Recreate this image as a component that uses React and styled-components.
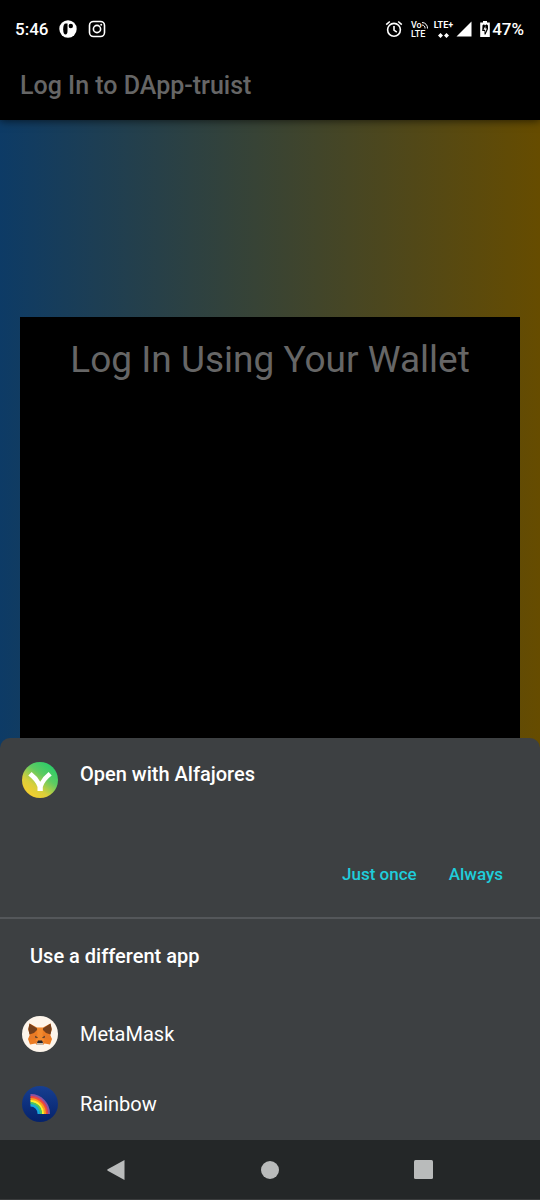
import React from "react";
import styled, { createGlobalStyle } from "styled-components";

const GlobalStyle = createGlobalStyle`
  *, *::before, *::after { box-sizing: border-box; }
  body {
    margin: 0;
    background: #000;
    font-family: Roboto, "Liberation Sans", sans-serif;
  }
  h1, h2, p { margin: 0; }
  button {
    margin: 0;
    padding: 0;
    border: 0;
    background: none;
    color: inherit;
    font: inherit;
    cursor: pointer;
  }
  svg { display: block; flex: none; }
`;

const Screen = styled.div`
  display: flex;
  flex-direction: column;
  min-height: 100vh;
`;

const StatusBar = styled.div`
  display: flex;
  align-items: center;
  justify-content: space-between;
  height: 52px;
  padding: 6px 16px 0 15px;
  background: #000;
  color: #fff;
  font-size: 17px;
  font-weight: 500;
  line-height: 24px;
`;

const StatusGroup = styled.div`
  display: flex;
  align-items: center;
  gap: ${(p) => p.$gap}px;
`;

const Battery = styled.span`
  display: flex;
  align-items: center;
  gap: 2px;
`;

const NetworkLabel = styled.span`
  display: flex;
  flex-direction: column;
  align-items: ${(p) => (p.$centered ? "center" : "flex-start")};
  gap: ${(p) => (p.$centered ? 4 : 1)}px;
  font-size: 9px;
  line-height: 8px;
  font-weight: ${(p) => (p.$centered ? 700 : 500)};
`;

const NetworkLine = styled.span`
  display: flex;
`;

const AppBar = styled.header`
  position: relative;
  display: flex;
  align-items: center;
  height: 68px;
  padding: 0 20px;
  background: #000;
  box-shadow: 0 1px 8px rgba(0, 0, 0, 0.6);
`;

const AppTitle = styled.h1`
  color: #666;
  font-size: 25px;
  font-weight: 500;
  line-height: 32px;
`;

const Backdrop = styled.main`
  display: flex;
  flex: 1;
  padding: 197px 20px 0;
  background: linear-gradient(90deg, #0d3b66, #664c00);
`;

const WalletCard = styled.section`
  flex: 1;
  padding: 19px 16px;
  background: #000;
`;

const WalletHeading = styled.h2`
  color: #666;
  font-size: 37px;
  font-weight: 400;
  line-height: 48px;
  text-align: center;
`;

const Sheet = styled.section`
  position: relative;
  margin-top: -10px;
  border-radius: 10px 10px 0 0;
  background: #3d4042;
  color: #fff;
  font-size: 20px;
  line-height: 24px;
`;

const SheetHeader = styled.div`
  display: flex;
  align-items: flex-start;
  gap: 22px;
  padding: 24px 22px 52px;
`;

const SheetTitle = styled.h2`
  font-size: 20px;
  font-weight: 500;
  line-height: 24px;
`;

const SheetActions = styled.div`
  display: flex;
  justify-content: flex-end;
  padding: 0 21px 19px;
`;

const TextButton = styled.button`
  height: 48px;
  padding: 0 16px;
  color: #1fcddb;
  font-size: 17px;
  font-weight: 500;
`;

const OtherApps = styled.div`
  padding-bottom: 1px;
  border-top: 2px solid #54575a;
`;

const OtherTitle = styled(SheetTitle)`
  padding: 25px 30px 31px;
`;

const AppRow = styled.button`
  display: flex;
  align-items: center;
  gap: 22px;
  width: 100%;
  height: 70px;
  padding: 0 22px;
  text-align: left;
`;

const NavBar = styled.nav`
  display: flex;
  height: 60px;
  padding: 0 40px 0 39px;
  border-bottom: 1px solid #3a3c3d;
  background: #242728;
`;

const NavButton = styled.button`
  display: flex;
  flex: 1;
  align-items: center;
  justify-content: center;
  color: #b9bbbb;
`;

const NotificationIcon = () => (
  <svg width="18" height="18" viewBox="0 0 18 18" aria-hidden="true">
    <circle cx="9" cy="9" r="8.7" fill="#fff" />
    <path d="M8.500 3.500v7.500c0 2.200-.6 3.400-2 3.400S4.200 13 4.200 9.200 5 3.500 6.800 3.500z" fill="#000" />
    <circle cx="11.800" cy="6" r="2.200" fill="#000" />
  </svg>
);

const InstagramIcon = () => (
  <svg width="18" height="18" viewBox="0 0 18 18" fill="none" stroke="#fff" strokeWidth="1.6" aria-hidden="true">
    <rect x="1.500" y="1.500" width="15" height="15" rx="4" />
    <circle cx="9" cy="9" r="3.600" />
    <circle cx="13.200" cy="4.800" r="1" fill="#fff" stroke="none" />
  </svg>
);

const AlarmIcon = () => (
  <svg width="18" height="18" viewBox="0 0 18 18" fill="none" stroke="#fff" strokeWidth="1.600" aria-hidden="true">
    <circle cx="9" cy="9.800" r="6.400" />
    <path d="M9 6v4.200l2.800 1.900M1.200 4.600 4.800 1.500M16.800 4.600 13.200 1.500" />
  </svg>
);

const WaveIcon = () => (
  <svg width="6" height="8" viewBox="0 0 6 8" fill="none" stroke="#fff" strokeWidth="1" aria-hidden="true">
    <path d="M0 1.500A5.500 5.500 0 0 1 5.500 7.500M0 4A3 3 0 0 1 3 7.500" />
  </svg>
);

const DataIcon = () => (
  <svg width="11" height="5" viewBox="0 0 11 5" fill="#fff" aria-hidden="true">
    <path d="M2.500 0 5 2.500 2.500 5 0 2.500zM8.500 0 11 2.500 8.500 5 6 2.500z" />
  </svg>
);

const SignalIcon = () => (
  <svg width="16" height="16" viewBox="0 0 16 16" fill="#fff" aria-hidden="true">
    <path d="M15.500.5v15H.5z" />
  </svg>
);

const BatteryIcon = () => (
  <svg width="10" height="16" viewBox="0 0 10 16" aria-hidden="true">
    <path d="M3 0h4v1.500h2.800V16H.2V1.500H3z" fill="#fff" />
    <path d="M2.500 4.200 4 3.200 5 4.500 6.500 3.200 8 4.500V8L5.500 13.500H4.500V10H2.200z" fill="#000" />
    <path d="M5.400 5 3.500 8.800H5.200V11.500L6.800 7.600H5.400z" fill="#fff" />
  </svg>
);

const AlfajoresIcon = () => (
  <svg width="36" height="36" viewBox="0 0 36 36" aria-hidden="true">
    <defs>
      <linearGradient id="alfajores" x1=".2" y1=".9" x2=".8" y2=".1">
        <stop offset="0" stopColor="#f4ce2f" />
        <stop offset=".28" stopColor="#d9cf3b" />
        <stop offset=".65" stopColor="#5fcb62" />
        <stop offset="1" stopColor="#2ecc69" />
      </linearGradient>
    </defs>
    <circle cx="18" cy="18" r="18" fill="url(#alfajores)" />
    <path d="M6.300 13.500 9.600 10Q15.500 14.500 18.200 19.800Q21 14.500 26.600 10L29.700 13.500Q22.500 19 20.800 25V29H15.500V25Q13.500 19 6.300 13.500z" fill="#fff" />
  </svg>
);

const MetaMaskIcon = () => (
  <svg width="36" height="36" viewBox="0 0 36 36" aria-hidden="true">
    <circle cx="18" cy="18" r="18" fill="#fdf5eb" />
    <path d="M7.500 7.500 15 11.500h6l7.500-4 1.200 6-1.500 5.500 1.800 4-2 5.500-5.500-1-1.500 1.500h-6L13.500 27.500 8 28.500 6 23l1.800-4-1.500-5.500z" fill="#ed7c22" />
    <path d="M7.500 7.500 16 13 12 17 7.500 18.500 6.300 13zM28.500 7.500 20 13 24 17l4.500 1.500L29.700 13z" fill="#74401c" />
    <path d="M15 12h6l-.5 7 2 6h-9l2-6z" fill="#f28a2e" />
    <path d="M8 19l6-1 1.500 5L7 23.500zM28 19l-6-1-1.500 5 8.500.5z" fill="#e57a28" />
    <path d="M13 19.800l2.800 1.500-.4.800-2.200-.3zM23 19.800l-2.800 1.500.4.800 2.200-.3z" fill="#57402f" />
    <path d="M14.800 26h6.400v3h-6.400z" fill="#c3b8ac" />
    <path d="M16 24.500h4l1 2.500h-6z" fill="#20242b" />
  </svg>
);

const RainbowIcon = () => (
  <svg width="36" height="36" viewBox="0 0 36 36" fill="none" aria-hidden="true">
    <defs>
      <linearGradient id="night" x1="0" y1="0" x2="0" y2="1">
        <stop offset="0" stopColor="#173f91" />
        <stop offset="1" stopColor="#05226b" />
      </linearGradient>
    </defs>
    <circle cx="18" cy="18" r="18" fill="url(#night)" />
    <g strokeWidth="2.400">
      <path d="M8.500 9.200A18.300 18.300 0 0 1 26.800 28" stroke="#8c52a1" />
      <path d="M8.500 11.200A16.300 16.300 0 0 1 24.800 28" stroke="#f0473f" />
      <path d="M8.500 13.200A14.300 14.300 0 0 1 22.800 28" stroke="#ff9c1c" />
      <path d="M8.500 15.200A12.300 12.300 0 0 1 20.800 28" stroke="#fff02c" />
      <path d="M8.500 17.200A10.300 10.300 0 0 1 18.800 28" stroke="#49c564" />
      <path d="M8.500 19.200A8.300 8.300 0 0 1 16.800 28" stroke="#16a9df" />
    </g>
  </svg>
);

const OTHER_APPS = [
  { name: "MetaMask", Icon: MetaMaskIcon },
  { name: "Rainbow", Icon: RainbowIcon },
];

export default function App() {
  return (
    <Screen>
      <GlobalStyle />
      <StatusBar>
        <StatusGroup $gap={11}>
          <span>5:46</span>
          <NotificationIcon />
          <InstagramIcon />
        </StatusGroup>
        <StatusGroup $gap={8}>
          <AlarmIcon />
          <StatusGroup $gap={6}>
            <NetworkLabel>
              <NetworkLine>Vo<WaveIcon /></NetworkLine>
              <NetworkLine>LTE</NetworkLine>
            </NetworkLabel>
            <StatusGroup $gap={3}>
              <NetworkLabel $centered>
                <NetworkLine>LTE+</NetworkLine>
                <DataIcon />
              </NetworkLabel>
              <SignalIcon />
            </StatusGroup>
          </StatusGroup>
          <Battery>
            <BatteryIcon />
            <span>47%</span>
          </Battery>
        </StatusGroup>
      </StatusBar>
      <AppBar>
        <AppTitle>Log In to DApp-truist</AppTitle>
      </AppBar>
      <Backdrop>
        <WalletCard>
          <WalletHeading>Log In Using Your Wallet</WalletHeading>
        </WalletCard>
      </Backdrop>
      <Sheet>
        <SheetHeader>
          <AlfajoresIcon />
          <SheetTitle>Open with Alfajores</SheetTitle>
        </SheetHeader>
        <SheetActions>
          <TextButton type="button">Just once</TextButton>
          <TextButton type="button">Always</TextButton>
        </SheetActions>
        <OtherApps>
          <OtherTitle>Use a different app</OtherTitle>
          {OTHER_APPS.map(({ name, Icon }) => (
            <AppRow key={name} type="button">
              <Icon />
              <span>{name}</span>
            </AppRow>
          ))}
        </OtherApps>
      </Sheet>
      <NavBar aria-label="System navigation">
        <NavButton type="button" aria-label="Back">
          <svg width="20" height="22" viewBox="0 0 20 22" fill="currentColor">
            <path d="M18.500 1v20L1.700 11.700q-1.200-.7 0-1.400z" />
          </svg>
        </NavButton>
        <NavButton type="button" aria-label="Home">
          <svg width="18" height="18" viewBox="0 0 18 18" fill="currentColor">
            <circle cx="9" cy="9" r="9" />
          </svg>
        </NavButton>
        <NavButton type="button" aria-label="Recent apps">
          <svg width="19" height="19" viewBox="0 0 19 19" fill="currentColor">
            <rect width="19" height="19" rx="1.500" />
          </svg>
        </NavButton>
      </NavBar>
    </Screen>
  );
}
